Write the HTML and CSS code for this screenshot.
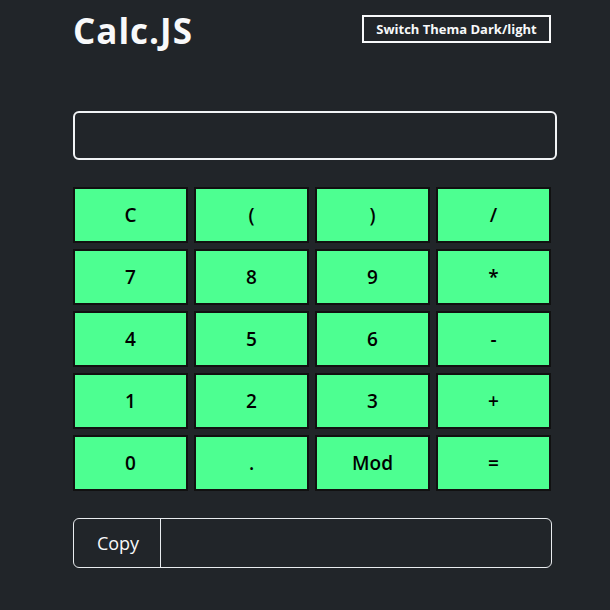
FILE: index.html
```html
<!DOCTYPE html>
<html>
<head>
<meta charset="utf-8">
<link rel="stylesheet" href="styles.css">
</head>
<body>
<div class="app">
  <header class="header">
    <h1 class="title">Calc.JS</h1>
    <button class="theme-btn">Switch Thema Dark/light</button>
  </header>
  <div class="display"></div>
  <div class="keys">
    <button class="key">C</button>
    <button class="key">(</button>
    <button class="key">)</button>
    <button class="key">/</button>
    <button class="key">7</button>
    <button class="key">8</button>
    <button class="key">9</button>
    <button class="key">*</button>
    <button class="key">4</button>
    <button class="key">5</button>
    <button class="key">6</button>
    <button class="key">-</button>
    <button class="key">1</button>
    <button class="key">2</button>
    <button class="key">3</button>
    <button class="key">+</button>
    <button class="key">0</button>
    <button class="key">.</button>
    <button class="key">Mod</button>
    <button class="key">=</button>
  </div>
  <div class="copy-group">
    <button class="copy-btn">Copy</button>
    <div class="copy-field"></div>
  </div>
</div>
</body>
</html>
```
FILE: styles.css
```css
* { box-sizing: border-box; }
html, body {
  margin: 0;
  padding: 0;
  background: #212529;
  font-family: "Open Sans", "Noto Sans", sans-serif;
  color: #f8f9fa;
}
.app {
  width: 484px;
  margin-left: 73px;
  padding-top: 15px;
}
.header {
  display: flex;
  justify-content: space-between;
  align-items: flex-start;
  height: 96px;
  padding-right: 6px;
}
.title {
  margin: 0;
  font-size: 35px;
  font-weight: 700;
  line-height: 32px;
  color: #f8f9fa;
  letter-spacing: 1px;
}
.theme-btn {
  height: 28px;
  width: 189px;
  border: 2px solid #f8f9fa;
  background: transparent;
  color: #f8f9fa;
  font-family: inherit;
  font-size: 13px;
  font-weight: 700;
  padding: 0;
}
.display {
  height: 49px;
  border: 2px solid #f1f3f5;
  border-radius: 6px;
  margin-bottom: 27px;
}
.keys {
  width: 478px;
  display: grid;
  grid-template-columns: repeat(4, 1fr);
  grid-auto-rows: 56px;
  gap: 6px;
}
.key {
  background: #4dff91;
  border: 2px solid #111;
  color: #000;
  font-family: inherit;
  font-size: 19px;
  font-weight: 600;
  padding: 0;
}
.copy-group {
  width: 479px;
  height: 50px;
  margin-top: 27px;
  border: 1px solid #e9ecef;
  border-radius: 6px;
  display: flex;
}
.copy-btn {
  width: 87px;
  background: transparent;
  border: none;
  border-right: 1px solid #e9ecef;
  color: #f8f9fa;
  font-family: inherit;
  font-size: 18px;
  padding: 0 0 0 2px;
}
.copy-field { flex: 1; }
```
